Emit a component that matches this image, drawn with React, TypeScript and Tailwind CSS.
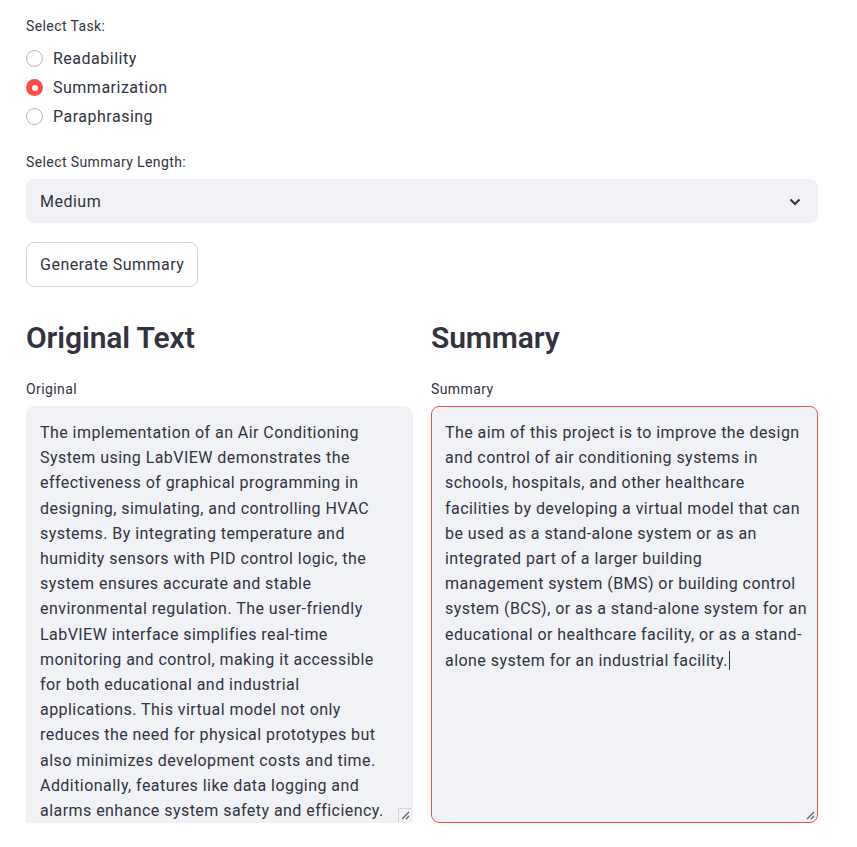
import React from "react";

const FONT = { fontFamily: "Roboto, 'Noto Sans', sans-serif" };

const originalLines = [
  "The implementation of an Air Conditioning",
  "System using LabVIEW demonstrates the",
  "effectiveness of graphical programming in",
  "designing, simulating, and controlling HVAC",
  "systems. By integrating temperature and",
  "humidity sensors with PID control logic, the",
  "system ensures accurate and stable",
  "environmental regulation. The user-friendly",
  "LabVIEW interface simplifies real-time",
  "monitoring and control, making it accessible",
  "for both educational and industrial",
  "applications. This virtual model not only",
  "reduces the need for physical prototypes but",
  "also minimizes development costs and time.",
  "Additionally, features like data logging and",
  "alarms enhance system safety and efficiency.",
];

const summaryLines = [
  "The aim of this project is to improve the design",
  "and control of air conditioning systems in",
  "schools, hospitals, and other healthcare",
  "facilities by developing a virtual model that can",
  "be used as a stand-alone system or as an",
  "integrated part of a larger building",
  "management system (BMS) or building control",
  "system (BCS), or as a stand-alone system for an",
  "educational or healthcare facility, or as a stand-",
  "alone system for an industrial facility.",
];

function Radio({ label, checked }: { label: string; checked?: boolean }) {
  return (
    <div className="flex h-[29px] items-center">
      {checked ? (
        <span className="flex h-[17px] w-[17px] items-center justify-center rounded-full bg-[#ff4b4b]">
          <span className="h-[6px] w-[6px] rounded-full bg-white" />
        </span>
      ) : (
        <span className="h-[17px] w-[17px] rounded-full border border-[#b3b5bd] bg-white" />
      )}
      <span className="ml-[10px] text-[16px] tracking-[0.5px] text-[#31333f]">{label}</span>
    </div>
  );
}

function Grip() {
  return (
    <svg width="9" height="9" viewBox="0 0 9 9" className="absolute bottom-[2px] right-[2px]">
      <path d="M1 8 L8 1 M5 8 L8 5" stroke="#5c5d66" strokeWidth="1.3" />
    </svg>
  );
}

export default function App() {
  return (
    <div className="min-h-[847px] bg-white text-[#31333f]" style={FONT}>
      <div className="ml-[26px] w-[792px] pt-[16px]">
        <div className="text-[14px] leading-[21px] tracking-[0.4px]">Select Task:</div>
        <div className="mt-[7px] flex flex-col">
          <Radio label="Readability" />
          <Radio label="Summarization" checked />
          <Radio label="Paraphrasing" />
        </div>

        <div className="mt-[21px] text-[14px] leading-[21px] tracking-[0.4px]">Select Summary Length:</div>
        <div className="mt-[6px] flex h-[44px] items-center justify-between rounded-lg bg-[#f0f2f6] pl-[14px] pr-[17px] pt-[2px]">
          <span className="text-[16px] tracking-[0.5px]">Medium</span>
          <svg width="12" height="8" viewBox="0 0 12 8">
            <path d="M1.5 1.5 L6 6 L10.5 1.5" fill="none" stroke="#31333f" strokeWidth="2" />
          </svg>
        </div>

        <button className="mt-[19px] flex h-[45px] items-center rounded-lg border border-[#d6d6d9] bg-white px-[13px] text-[16px] tracking-[0.5px] text-[#31333f]">
          Generate Summary
        </button>

        <div className="mt-[31px] grid grid-cols-2 gap-[18px]">
          <div className="flex flex-col">
            <h2 className="h-[40px] text-[30px] font-semibold leading-[40px] tracking-[-0.1px]">Original Text</h2>
            <div className="mt-[21px] text-[14px] leading-[21px] tracking-[0.4px]">Original</div>
            <div className="relative mt-[6px] h-[417px] overflow-hidden rounded-t-lg border border-[#f0f2f6] bg-[#f0f2f6] pl-[13px] pt-[13px] text-[16px] leading-[25.2px] tracking-[0.45px]">
              {originalLines.map((l, i) => (
                <div key={i} className="whitespace-nowrap">{l}</div>
              ))}
              <div className="absolute bottom-0 right-0 h-[14px] w-[14px] border-l border-t border-[#d6d6d9] bg-[#f0f2f6]">
                <Grip />
              </div>
            </div>
          </div>
          <div className="flex flex-col">
            <h2 className="h-[40px] text-[30px] font-semibold leading-[40px] tracking-[-0.1px]">Summary</h2>
            <div className="mt-[21px] text-[14px] leading-[21px] tracking-[0.4px]">Summary</div>
            <div className="relative mt-[6px] h-[417px] overflow-hidden rounded-lg border border-[#ff4b4b] bg-[#f0f2f6] pl-[13px] pt-[13px] text-[16px] leading-[25.2px] tracking-[0.45px]">
              {summaryLines.map((l, i) => (
                <div key={i} className="whitespace-nowrap">
                  {l}
                  {i === summaryLines.length - 1 && (
                    <span className="ml-[1px] inline-block h-[19px] w-[1px] translate-y-[4px] bg-[#31333f]" />
                  )}
                </div>
              ))}
              <Grip />
            </div>
          </div>
        </div>
      </div>
    </div>
  );
}
